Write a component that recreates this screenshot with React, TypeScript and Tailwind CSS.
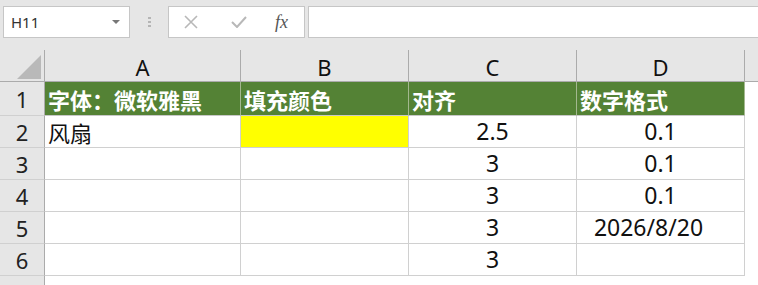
import { FC } from "react";

const cols = [
  { key: "A", w: "w-[196px]" },
  { key: "B", w: "w-[168px]" },
  { key: "C", w: "w-[168px]" },
  { key: "D", w: "w-[168px]" },
];

const rows: { n: number; cells: string[] }[] = [
  { n: 2, cells: ["风扇", "", "2.5", "0.1"] },
  { n: 3, cells: ["", "", "3", "0.1"] },
  { n: 4, cells: ["", "", "3", "0.1"] },
  { n: 5, cells: ["", "", "3", "2026/8/20"] },
  { n: 6, cells: ["", "", "3", ""] },
];

const headers = ["字体：微软雅黑", "填充颜色", "对齐", "数字格式"];

const font = { fontFamily: '"Noto Sans", "Noto Sans CJK SC", sans-serif' };

const RowHead: FC<{ n: number; h: string }> = ({ n, h }) => (
  <div className={`w-[45px] ${h} shrink-0 bg-[#e6e6e6] border-r border-[#ababab] border-b border-b-[#d0d0d0] flex items-center justify-center text-[22px] leading-none text-[#222]`}>
    {n}
  </div>
);

const App: FC = () => {
  return (
    <div className="w-[758px] h-[285px] overflow-hidden bg-white select-none" style={font}>
      {/* formula bar */}
      <div className="bg-[#e6e6e6] h-[50px] flex items-start pt-[6px] pl-[3px]">
        <div className="w-[127px] h-[32px] bg-white border border-[#c6c6c6] flex items-center justify-between pl-[7px] pr-[9px]">
          <span className="text-[15px] text-[#333]">H11</span>
          <svg width="8" height="5" viewBox="0 0 8 5"><path d="M0 0h8L4 4z" fill="#777" /></svg>
        </div>
        <div className="w-[38px] h-[32px] flex flex-col items-center justify-center gap-[2px]">
          <span className="w-[3px] h-[2px] bg-[#b5b5b5]" />
          <span className="w-[3px] h-[2px] bg-[#b5b5b5]" />
          <span className="w-[3px] h-[2px] bg-[#b5b5b5]" />
        </div>
        <div className="w-[137px] h-[32px] bg-white border border-[#c6c6c6] flex items-center">
          <svg className="ml-[15px]" width="14" height="14" viewBox="0 0 14 14">
            <path d="M1 1L13 13M13 1L1 13" stroke="#b8b8b8" strokeWidth="1.6" fill="none" />
          </svg>
          <svg className="ml-[33px]" width="16" height="12" viewBox="0 0 16 12">
            <path d="M1 6L6 11L15 1" stroke="#b8b8b8" strokeWidth="2" fill="none" />
          </svg>
          <span className="ml-[28px] text-[18px] italic text-[#555]" style={{ fontFamily: '"Liberation Serif", serif' }}>
            fx
          </span>
        </div>
        <div className="ml-[3px] flex-1 h-[32px] bg-white border border-[#c6c6c6] border-r-0" />
      </div>

      {/* column header */}
      <div className="flex h-[32px] bg-[#e6e6e6] border-b border-[#ababab]">
        <div className="w-[45px] shrink-0 border-r border-[#ababab] flex items-end justify-end pr-[3px] pb-[2px]">
          <svg width="24" height="24" viewBox="0 0 24 24"><path d="M24 0V24H0z" fill="#b9b9b9" /></svg>
        </div>
        {cols.map((c) => (
          <div key={c.key} className={`${c.w} shrink-0 border-r border-[#ababab] flex items-center justify-center text-[22px] leading-none text-[#111] pt-[2px]`}>
            {c.key}
          </div>
        ))}
      </div>

      {/* row 1 */}
      <div className="flex">
        <RowHead n={1} h="h-[34px]" />
        {headers.map((t, i) => (
          <div
            key={i}
            className={`${cols[i].w} h-[34px] shrink-0 bg-[#548235] border-r border-[#a3b88f] border-b border-b-[#c8c8c8] flex items-center pl-[3px] text-[22px] leading-none font-bold text-white`}
            style={{ fontFamily: '"Noto Sans CJK SC", sans-serif' }}
          >
            {t}
          </div>
        ))}
      </div>

      {rows.map((r) => (
        <div key={r.n} className="flex">
          <RowHead n={r.n} h="h-[32px]" />
          {r.cells.map((t, i) => (
            <div
              key={i}
              className={`${cols[i].w} h-[32px] shrink-0 border-r border-b border-[#d0d0d0] flex items-center leading-none text-[#111] ${
                i === 1 && r.n === 2 ? "bg-[#ffff00]" : ""
              } ${i === 0 ? "pl-[3px] text-[22px]" : "justify-center text-[23px]"} ${t.includes("/") ? "pr-[24px]" : ""}`}
              style={{ fontFamily: i === 0 ? '"Noto Sans CJK SC", sans-serif' : '"Noto Sans", sans-serif' }}
            >
              {t}
            </div>
          ))}
        </div>
      ))}

      <div className="flex">
        <RowHead n={7} h="h-[32px]" />
      </div>
    </div>
  );
};

export default App;
